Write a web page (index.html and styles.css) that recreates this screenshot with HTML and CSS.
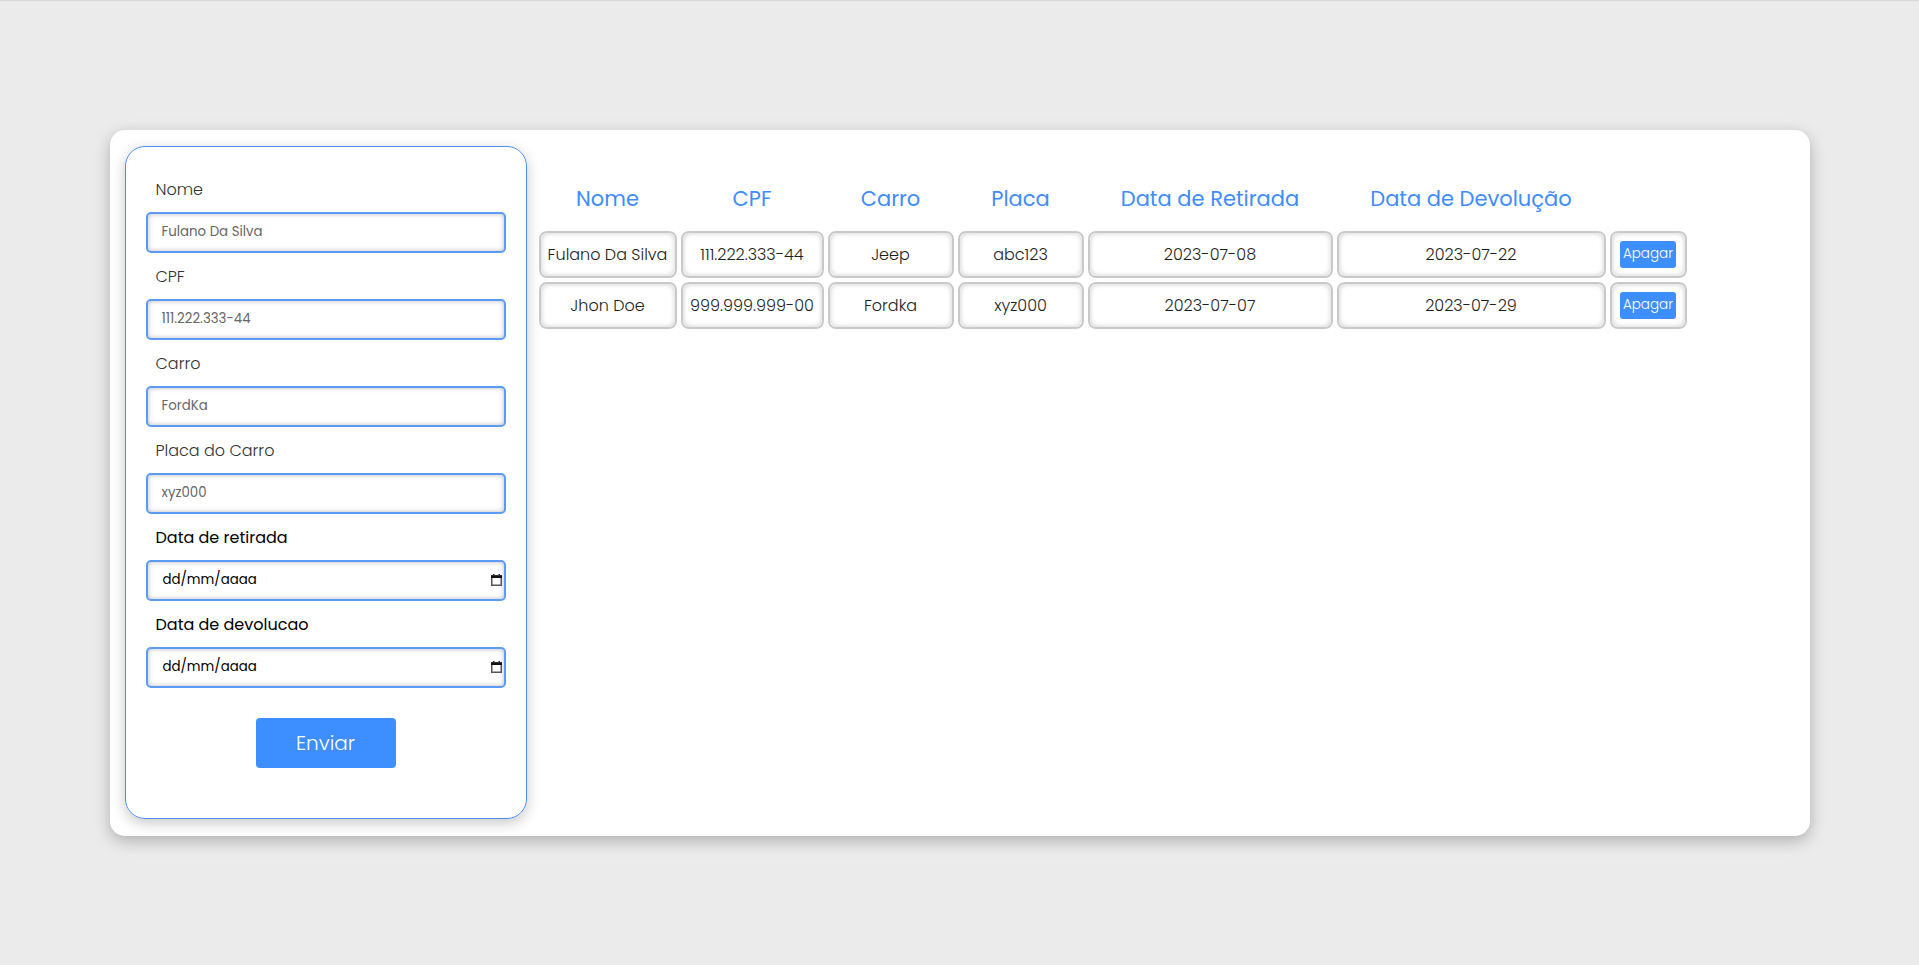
FILE: index.html
```html
<!DOCTYPE html>
<html lang="pt-BR">
<head>
<meta charset="utf-8">
<title>Aluguel de Carros</title>
<link rel="stylesheet" href="styles.css">
</head>
<body>
<main class="card">
  <form class="form-panel">
    <div class="field">
      <label class="label">Nome</label>
      <input class="text-input" type="text" value="Fulano Da Silva">
    </div>
    <div class="field">
      <label class="label">CPF</label>
      <input class="text-input" type="text" value="111.222.333-44">
    </div>
    <div class="field">
      <label class="label">Carro</label>
      <input class="text-input" type="text" value="FordKa">
    </div>
    <div class="field">
      <label class="label">Placa do Carro</label>
      <input class="text-input" type="text" value="xyz000">
    </div>
    <div class="field">
      <label class="label label-strong">Data de retirada</label>
      <div class="date-input">
        <span class="date-text">dd/mm/aaaa</span>
        <svg class="cal-icon" width="11" height="12" viewBox="0 0 11 12"><rect x="2" y="0" width="1.5" height="2" fill="#222"/><rect x="7.5" y="0" width="1.5" height="2" fill="#222"/><rect x="0.75" y="1.75" width="9.5" height="9.5" fill="none" stroke="#555" stroke-width="1.5"/><rect x="0" y="1.5" width="11" height="2.5" fill="#111"/></svg>
      </div>
    </div>
    <div class="field">
      <label class="label label-strong">Data de devolucao</label>
      <div class="date-input">
        <span class="date-text">dd/mm/aaaa</span>
        <svg class="cal-icon" width="11" height="12" viewBox="0 0 11 12"><rect x="2" y="0" width="1.5" height="2" fill="#222"/><rect x="7.5" y="0" width="1.5" height="2" fill="#222"/><rect x="0.75" y="1.75" width="9.5" height="9.5" fill="none" stroke="#555" stroke-width="1.5"/><rect x="0" y="1.5" width="11" height="2.5" fill="#111"/></svg>
      </div>
    </div>
    <div class="actions">
      <button class="submit-btn" type="button">Enviar</button>
    </div>
  </form>

  <section class="list">
    <table class="rentals">
      <thead>
        <tr>
          <th class="col-nome">Nome</th>
          <th class="col-cpf">CPF</th>
          <th class="col-carro">Carro</th>
          <th class="col-placa">Placa</th>
          <th class="col-ret">Data de Retirada</th>
          <th class="col-dev">Data de Devolução</th>
          <th class="col-act"></th>
        </tr>
      </thead>
      <tbody>
        <tr>
          <td>Fulano Da Silva</td>
          <td>111.222.333-44</td>
          <td>Jeep</td>
          <td>abc123</td>
          <td>2023-07-08</td>
          <td>2023-07-22</td>
          <td class="action-cell"><button class="delete-btn" type="button">Apagar</button></td>
        </tr>
        <tr>
          <td>Jhon Doe</td>
          <td>999.999.999-00</td>
          <td>Fordka</td>
          <td>xyz000</td>
          <td>2023-07-07</td>
          <td>2023-07-29</td>
          <td class="action-cell"><button class="delete-btn" type="button">Apagar</button></td>
        </tr>
      </tbody>
    </table>
  </section>
</main>
</body>
</html>
```

FILE: styles.css
```css
* {
  box-sizing: border-box;
}

html, body {
  margin: 0;
  padding: 0;
}

body {
  min-height: 100vh;
  background: #ebebeb;
  border-top: 1px solid #d8d8d8;
  display: flex;
  align-items: center;
  justify-content: center;
  font-family: "Poppins", "Open Sans", "Liberation Sans", sans-serif;
}

.card {
  width: 1700px;
  background: #ffffff;
  border-radius: 15px;
  padding: 16px 15px 17px;
  display: flex;
  align-items: stretch;
  gap: 8px;
  box-shadow: 0 5px 16px rgba(0, 0, 0, 0.25);
  margin-top: -1px;
}

/* ---------- form ---------- */
.form-panel {
  width: 402px;
  flex: 0 0 402px;
  border: 1px solid #4a8ff5;
  border-radius: 20px;
  padding: 31px 20px 50px;
  box-shadow: 0 4px 14px rgba(0, 0, 0, 0.22);
  margin: 0;
}

.field {
  margin-bottom: 12px;
}

.label {
  display: block;
  margin: 0 0 10px 10px;
  font-size: 16px;
  line-height: 24px;
  font-weight: 300;
  color: #333333;
}

.label-strong {
  font-weight: 400;
  color: #000000;
}

.text-input,
.date-input {
  display: block;
  width: 100%;
  height: 41px;
  border: 2px solid #5b9bf5;
  border-radius: 5px;
  background: #ffffff;
  box-shadow: inset 0 0 5px rgba(0, 0, 0, 0.28);
  font-family: inherit;
  font-size: 13.33px;
  outline: none;
}

.text-input {
  padding: 0 14px;
  color: #666666;
}

.date-input {
  display: flex;
  align-items: center;
  justify-content: space-between;
  padding: 0 2px 0 15px;
}

.date-text {
  color: #000000;
}

.cal-icon {
  display: block;
}

.actions {
  display: flex;
  justify-content: center;
  margin-top: 30px;
}

.submit-btn {
  width: 140px;
  height: 50px;
  border: none;
  border-radius: 4px;
  background: #3d8eff;
  color: #ffffff;
  font-family: inherit;
  font-size: 20px;
  font-weight: 300;
}

/* ---------- table ---------- */
.list {
  padding-top: 34px;
}

.rentals {
  border-collapse: separate;
  border-spacing: 4px;
  table-layout: fixed;
  width: 1156px;
}

.rentals th {
  padding: 0 0 13px;
  font-size: 21px;
  line-height: 30px;
  font-weight: 400;
  color: #3f8cff;
  text-align: center;
  white-space: nowrap;
}

.col-nome { width: 138px; }
.col-cpf { width: 143px; }
.col-carro { width: 126px; }
.col-placa { width: 126px; }
.col-ret { width: 245px; }
.col-dev { width: 269px; }
.col-act { width: 77px; }

.rentals td {
  padding: 10px 4px;
  border: 2px solid #c9c9c9;
  border-radius: 8px;
  box-shadow: inset 0 0 5px rgba(0, 0, 0, 0.22);
  font-size: 16px;
  line-height: 23px;
  font-weight: 300;
  color: #1e1e1e;
  text-align: center;
  white-space: nowrap;
}

.rentals td.action-cell {
  padding: 8px 4px;
}

.delete-btn {
  display: block;
  margin: 0 auto;
  height: 27px;
  padding: 0 3px;
  border: none;
  border-radius: 3px;
  background: #3d8eff;
  color: #ffffff;
  font-family: inherit;
  font-size: 13.5px;
  font-weight: 300;
}
```
